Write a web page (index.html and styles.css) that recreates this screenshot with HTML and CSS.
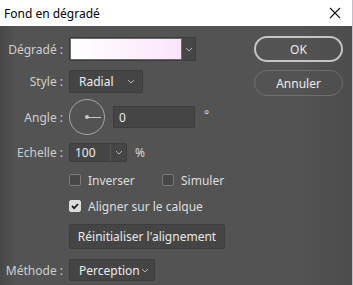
FILE: index.html
```html
<!DOCTYPE html>
<html lang="fr">
<head>
    <meta charset="UTF-8">
    <meta name="viewport" content="width=device-width, initial-scale=1.0">
    <title>Fond en dégradé</title>
    <link rel="stylesheet" href="styles.css">
</head>
<body>
    <div class="dialog">
        <div class="titlebar">
            <span class="title">Fond en dégradé</span>
            <svg class="close" width="12" height="12" viewBox="0 0 12 12">
                <path d="M1 1 L11 11 M11 1 L1 11" stroke="#111" stroke-width="1.1" fill="none"/>
            </svg>
        </div>

        <div class="content">
            <div class="form">
                <div class="row row-gradient">
                    <label class="label">Dégradé :</label>
                    <div class="gradient-picker">
                        <div class="swatch"></div>
                        <div class="arrow-box">
                            <svg width="8" height="5" viewBox="0 0 8 5"><polyline points="1,1 4,4 7,1" class="chev"/></svg>
                        </div>
                    </div>
                </div>

                <div class="row row-style">
                    <label class="label">Style :</label>
                    <div class="select select-style">
                        <span>Radial</span>
                        <svg width="8" height="5" viewBox="0 0 8 5"><polyline points="1,1 4,4 7,1" class="chev"/></svg>
                    </div>
                </div>

                <div class="row row-angle">
                    <label class="label">Angle :</label>
                    <div class="dial">
                        <span class="dial-dot"></span>
                        <span class="dial-hand"></span>
                    </div>
                    <div class="field field-angle">0</div>
                    <span class="unit unit-deg">°</span>
                </div>

                <div class="row row-scale">
                    <label class="label">Echelle :</label>
                    <div class="combo">
                        <span class="combo-value">100</span>
                        <span class="combo-arrow">
                            <svg width="8" height="5" viewBox="0 0 8 5"><polyline points="1,1 4,4 7,1" class="chev"/></svg>
                        </span>
                    </div>
                    <span class="unit">%</span>
                </div>

                <div class="row row-checks">
                    <span class="label"></span>
                    <div class="check check-inverser"><span class="box"></span>Inverser</div>
                    <div class="check"><span class="box"></span>Simuler</div>
                </div>

                <div class="row row-align">
                    <span class="label"></span>
                    <div class="check">
                        <span class="box checked">
                            <svg width="10" height="10" viewBox="0 0 10 10"><polyline points="2,5 4.2,7.2 8,3" fill="none" stroke="#222" stroke-width="1.8"/></svg>
                        </span>
                        Aligner sur le calque
                    </div>
                </div>

                <div class="row row-reset">
                    <span class="label"></span>
                    <button class="btn-reset">Réinitialiser l'alignement</button>
                </div>

                <div class="row row-method">
                    <label class="label">Méthode :</label>
                    <div class="select select-method">
                        <span>Perception</span>
                        <svg width="8" height="5" viewBox="0 0 8 5"><polyline points="1,1 4,4 7,1" class="chev"/></svg>
                    </div>
                </div>
            </div>

            <div class="actions">
                <button class="btn-pill btn-ok">OK</button>
                <button class="btn-pill btn-cancel">Annuler</button>
            </div>
        </div>
    </div>
</body>
</html>
```

FILE: styles.css
```css
body {
    margin: 0;
    font-family: "Noto Sans", "Liberation Sans", sans-serif;
    font-size: 12px;
    background: #535353;
}
.dialog {
    width: 353px;
    height: 285px;
    box-sizing: border-box;
    border-right: 1px solid #c6bccd;
    background: linear-gradient(to right, #474747 0px, #535353 14px, #535353 300px, #4c4c4c 352px);
    display: flex;
    flex-direction: column;
    overflow: hidden;
}
.titlebar {
    height: 26px;
    background: #fff;
    display: flex;
    align-items: center;
    justify-content: space-between;
    padding: 0 11px 0 4px;
    color: #000;
    font-size: 12px;
}
.close {
    display: block;
}
.content {
    display: flex;
    flex: 1;
}
.form {
    display: flex;
    flex-direction: column;
    padding-top: 11px;
}
.row {
    display: flex;
    align-items: center;
    color: #d8d8d8;
}
.label {
    width: 63px;
    margin-right: 6px;
    text-align: right;
    color: #cfcfcf;
    white-space: nowrap;
    flex-shrink: 0;
}
.chev {
    fill: none;
    stroke: #b4b4b4;
    stroke-width: 1;
}

/* dégradé */
.row-gradient {
    height: 24px;
}
.gradient-picker {
    display: flex;
    height: 24px;
    width: 127px;
    border: 1px solid #3c3c3c;
    box-sizing: border-box;
}
.swatch {
    flex: 1;
    background: linear-gradient(to right, #ffffff, #fbe4fb);
    border: 1px solid #6a6a6a;
}
.arrow-box {
    width: 13px;
    background: #464646;
    display: flex;
    align-items: center;
    justify-content: center;
}

/* selects */
.select {
    display: flex;
    align-items: center;
    justify-content: space-between;
    box-sizing: border-box;
    background: #454545;
    border: 1px solid #3d3d3d;
    border-radius: 2px;
    color: #ececec;
    padding: 0 7px 0 9px;
}
.row-style {
    margin-top: 9px;
    height: 23px;
}
.select-style {
    width: 74px;
    height: 23px;
}
.row-method {
    margin-top: 10px;
    height: 22px;
}
.select-method {
    width: 86px;
    height: 22px;
    padding-right: 5px;
}

/* angle */
.row-angle {
    margin-top: 6px;
    height: 36px;
}
.dial {
    position: relative;
    width: 36px;
    height: 36px;
    box-sizing: border-box;
    border: 1px solid #a8a8a8;
    border-radius: 50%;
}
.dial-dot {
    position: absolute;
    left: 15px;
    top: 15px;
    width: 4px;
    height: 4px;
    border-radius: 50%;
    background: #c8c8c8;
}
.dial-hand {
    position: absolute;
    left: 17px;
    top: 16.5px;
    width: 14px;
    height: 1px;
    background: #c8c8c8;
}
.field {
    box-sizing: border-box;
    background: #454545;
    border: 1px solid #3d3d3d;
    color: #ececec;
    display: flex;
    align-items: center;
}
.field-angle {
    margin-left: 8px;
    width: 82px;
    height: 22px;
    padding-left: 5px;
}
.unit {
    color: #d8d8d8;
}
.unit-deg {
    margin-left: 9px;
    margin-top: -5px;
}

/* echelle */
.row-scale {
    margin-top: 8px;
    height: 19px;
}
.combo {
    display: flex;
    box-sizing: border-box;
    width: 58px;
    height: 19px;
    border: 1px solid #3d3d3d;
    border-radius: 2px;
    background: #454545;
    color: #ececec;
}
.combo-value {
    width: 41px;
    padding-left: 5px;
    box-sizing: border-box;
    border-right: 1px solid #5a5a5a;
    display: flex;
    align-items: center;
}
.combo-arrow {
    flex: 1;
    display: flex;
    align-items: center;
    justify-content: center;
}
.row-scale .unit {
    margin-left: 8px;
}

/* cases à cocher */
.row-checks {
    margin-top: 12px;
    height: 12px;
}
.row-align {
    margin-top: 14px;
    height: 12px;
}
.check {
    display: flex;
    align-items: center;
    color: #dedede;
}
.check-inverser {
    width: 93px;
}
.box {
    width: 12px;
    height: 12px;
    box-sizing: border-box;
    border: 1px solid #7a7a7a;
    border-radius: 2px;
    background: #474747;
    margin-right: 7px;
    display: flex;
    align-items: center;
    justify-content: center;
}
.box.checked {
    background: #dcdcdc;
    border-color: #dcdcdc;
}

/* bouton */
.row-reset {
    margin-top: 12px;
    height: 25px;
}
.btn-reset {
    height: 25px;
    width: 156px;
    font-family: inherit;
    font-size: 12px;
    color: #e8e8e8;
    background: #454545;
    border: 1px solid #3d3d3d;
    border-radius: 2px;
    padding: 0;
}

/* actions */
.actions {
    margin-left: auto;
    margin-right: 9px;
    padding-top: 10px;
    display: flex;
    flex-direction: column;
    gap: 8px;
}
.btn-pill {
    width: 89px;
    height: 26px;
    border-radius: 13px;
    background: transparent;
    font-family: inherit;
    font-size: 12px;
    color: #ececec;
    padding: 0;
}
.btn-ok {
    border: 2px solid #c4c4c4;
}
.btn-cancel {
    border: 1px solid #6e6e6e;
}
```
